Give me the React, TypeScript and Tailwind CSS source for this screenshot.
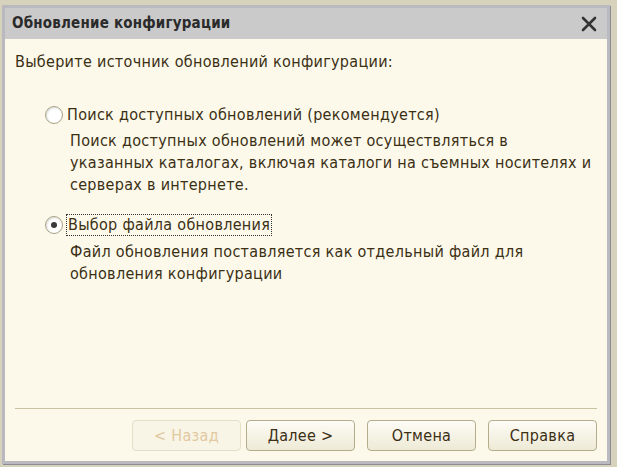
import { useState } from "react";

function Radio({ checked }: { checked: boolean }) {
  return (
    <span className="flex h-[18px] w-[18px] shrink-0 items-center justify-center rounded-full border border-[#a9a383] bg-white shadow-[inset_1px_1px_2px_rgba(0,0,0,0.15)]">
      {checked && <span className="h-[6px] w-[6px] rounded-full bg-[#3a3a3a]" />}
    </span>
  );
}

function Btn({ label, disabled, className = "" }: { label: string; disabled?: boolean; className?: string }) {
  return (
    <button
      className={
        "h-[31px] w-[109px] rounded-[4px] border text-[16px] tracking-[0.3px] " +
        (disabled
          ? "border-[#e4dfc8] bg-[#f8f5e6] text-[#e2c9a1] "
          : "border-[#b4ad8c] bg-gradient-to-b from-[#fdfcf5] to-[#eeead7] text-[#3b2f14] ") +
        className
      }
    >
      {label}
    </button>
  );
}

export default function App() {
  const [mode, setMode] = useState<"search" | "file">("file");

  return (
    <div className="h-[467px] w-[617px] overflow-hidden bg-[#d6d2bb] pb-[3px] pl-[2px] pr-[7px] pt-[5px] font-['DejaVu_Sans',sans-serif] font-stretch-condensed">
      <div className="flex h-full flex-col border-[3px] border-[#b9b9bf] bg-[#fcf9ea] shadow-[1px_1px_0_#8c8c94]">
        {/* Title bar */}
        <div className="flex h-[31px] shrink-0 items-center justify-between bg-[#cacaca] pl-[7px] pr-[8px]">
          <span className="text-[15px] font-bold tracking-[0.2px] text-[#2b2b2b]">Обновление конфигурации</span>
          <svg width="18" height="18" viewBox="0 0 18 18" className="mr-[1px]">
            <path d="M3 3 L15 15 M15 3 L3 15" stroke="#333" strokeWidth="2.6" strokeLinecap="round" />
          </svg>
        </div>

        {/* Body */}
        <div className="flex flex-1 flex-col px-[10px] text-[16px] tracking-[0.3px] text-[#3b2f14]">
          <p className="mt-[13px] leading-[20px]">Выберите источник обновлений конфигурации:</p>

          <div className="ml-[30px] mt-[33px]">
            <label className="flex cursor-default items-center gap-[3px]" onClick={() => setMode("search")}>
              <Radio checked={mode === "search"} />
              <span className="px-[1px] leading-[20px]">Поиск доступных обновлений (рекомендуется)</span>
            </label>
            <p className="ml-[25px] mt-[5px] whitespace-nowrap leading-[22px]">
              Поиск доступных обновлений может осуществляться в<br />
              указанных каталогах, включая каталоги на съемных носителях и<br />
              серверах в интернете.
            </p>

            <label className="mt-[18px] flex cursor-default items-center gap-[3px]" onClick={() => setMode("file")}>
              <Radio checked={mode === "file"} />
              <span className="border border-dotted border-[#333] px-[1px] leading-[20px]">Выбор файла обновления</span>
            </label>
            <p className="ml-[25px] mt-[5px] whitespace-nowrap leading-[22px]">
              Файл обновления поставляется как отдельный файл для<br />
              обновления конфигурации
            </p>
          </div>

          <div className="mt-auto border-t border-[#c9c3a3]" />
          <div className="mb-[10px] mt-[11px] flex justify-end">
            <Btn label="< Назад" disabled />
            <Btn label="Далее >" className="ml-[5px]" />
            <Btn label="Отмена" className="ml-[12px]" />
            <Btn label="Справка" className="ml-[12px]" />
          </div>
        </div>
      </div>
    </div>
  );
}
